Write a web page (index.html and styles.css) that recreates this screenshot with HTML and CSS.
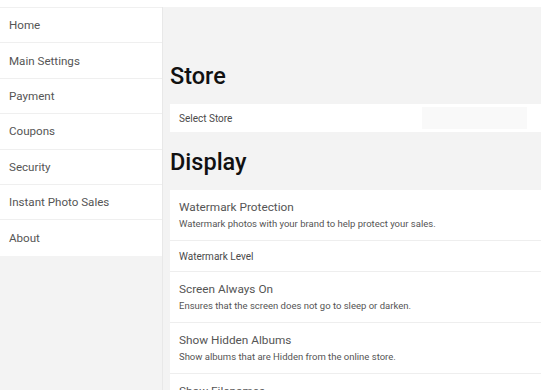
FILE: index.html
```html
<!DOCTYPE html>
<html lang="en">
<head>
  <meta charset="UTF-8">
  <meta name="viewport" content="width=device-width, initial-scale=1.0">
  <title>Settings</title>
  <link rel="stylesheet" href="styles.css">
</head>
<body>
  <div class="top-strip"></div>
  <div class="layout">
    <nav class="sidebar">
      <a class="nav-item" href="#">Home</a>
      <a class="nav-item" href="#">Main Settings</a>
      <a class="nav-item" href="#">Payment</a>
      <a class="nav-item" href="#">Coupons</a>
      <a class="nav-item" href="#">Security</a>
      <a class="nav-item" href="#">Instant Photo Sales</a>
      <a class="nav-item" href="#">About</a>
    </nav>

    <main class="content">
      <h2 class="section-title">Store</h2>
      <div class="card">
        <div class="row row-select">
          <span class="row-title">Select Store</span>
          <span class="select-box"></span>
        </div>
      </div>

      <h2 class="section-title">Display</h2>
      <div class="card">
        <div class="row">
          <div class="row-title">Watermark Protection</div>
          <div class="row-sub">Watermark photos with your brand to help protect your sales.</div>
        </div>
        <div class="row row-small">
          <div class="row-title small">Watermark Level</div>
        </div>
        <div class="row">
          <div class="row-title">Screen Always On</div>
          <div class="row-sub">Ensures that the screen does not go to sleep or darken.</div>
        </div>
        <div class="row">
          <div class="row-title">Show Hidden Albums</div>
          <div class="row-sub">Show albums that are Hidden from the online store.</div>
        </div>
        <div class="row">
          <div class="row-title">Show Filenames</div>
        </div>
      </div>
    </main>
  </div>
</body>
</html>
```

FILE: styles.css
```css
body {
  margin: 0;
  font-family: Roboto, "Liberation Sans", Arial, sans-serif;
  background: #fff;
  color: #444;
  height: 390px;
  overflow: hidden;
}

.top-strip {
  height: 7px;
  background: #fff;
}

.layout {
  display: flex;
  align-items: flex-start;
  background: #f3f3f3;
  min-height: 383px;
}

.sidebar {
  width: 162px;
  flex-shrink: 0;
  background: #fff;
  display: flex;
  flex-direction: column;
  border-top: 1px solid #f0f0f0;
}

.nav-item {
  height: 35.4px;
  box-sizing: border-box;
  display: flex;
  align-items: center;
  padding-left: 9px;
  font-size: 11.6px;
  color: #555;
  text-decoration: none;
  border-bottom: 1px solid #efefef;
}

.nav-item:last-child {
  border-bottom: none;
}

.content {
  flex: 1;
  min-height: 383px;
  padding: 55px 0 0 7px;
  border-left: 1px solid #e8e8e8;
  background: #f3f3f3;
}

.section-title {
  margin: 0 0 14px;
  font-size: 23.5px;
  line-height: 28px;
  font-weight: 500;
  color: #111;
}

.card {
  background: #fff;
  margin-bottom: 16px;
}

.row {
  padding: 10px 9px 10px;
  border-bottom: 1px solid #eeeeee;
}

.row-select {
  height: 28px;
  box-sizing: border-box;
  padding: 0 14px 0 9px;
  display: flex;
  align-items: center;
  justify-content: space-between;
  border-bottom: none;
}

.row-small {
  padding: 9px 9px 8px;
}

.row-title {
  font-size: 11.8px;
  line-height: 15px;
  color: #555;
}

.row-select .row-title,
.row-title.small {
  font-size: 10px;
  line-height: 13px;
  color: #4a4a4a;
}

.row-sub {
  margin-top: 2px;
  font-size: 9.5px;
  line-height: 13px;
  color: #555;
}

.select-box {
  width: 105px;
  height: 22px;
  background: #f9f9f9;
}
```
